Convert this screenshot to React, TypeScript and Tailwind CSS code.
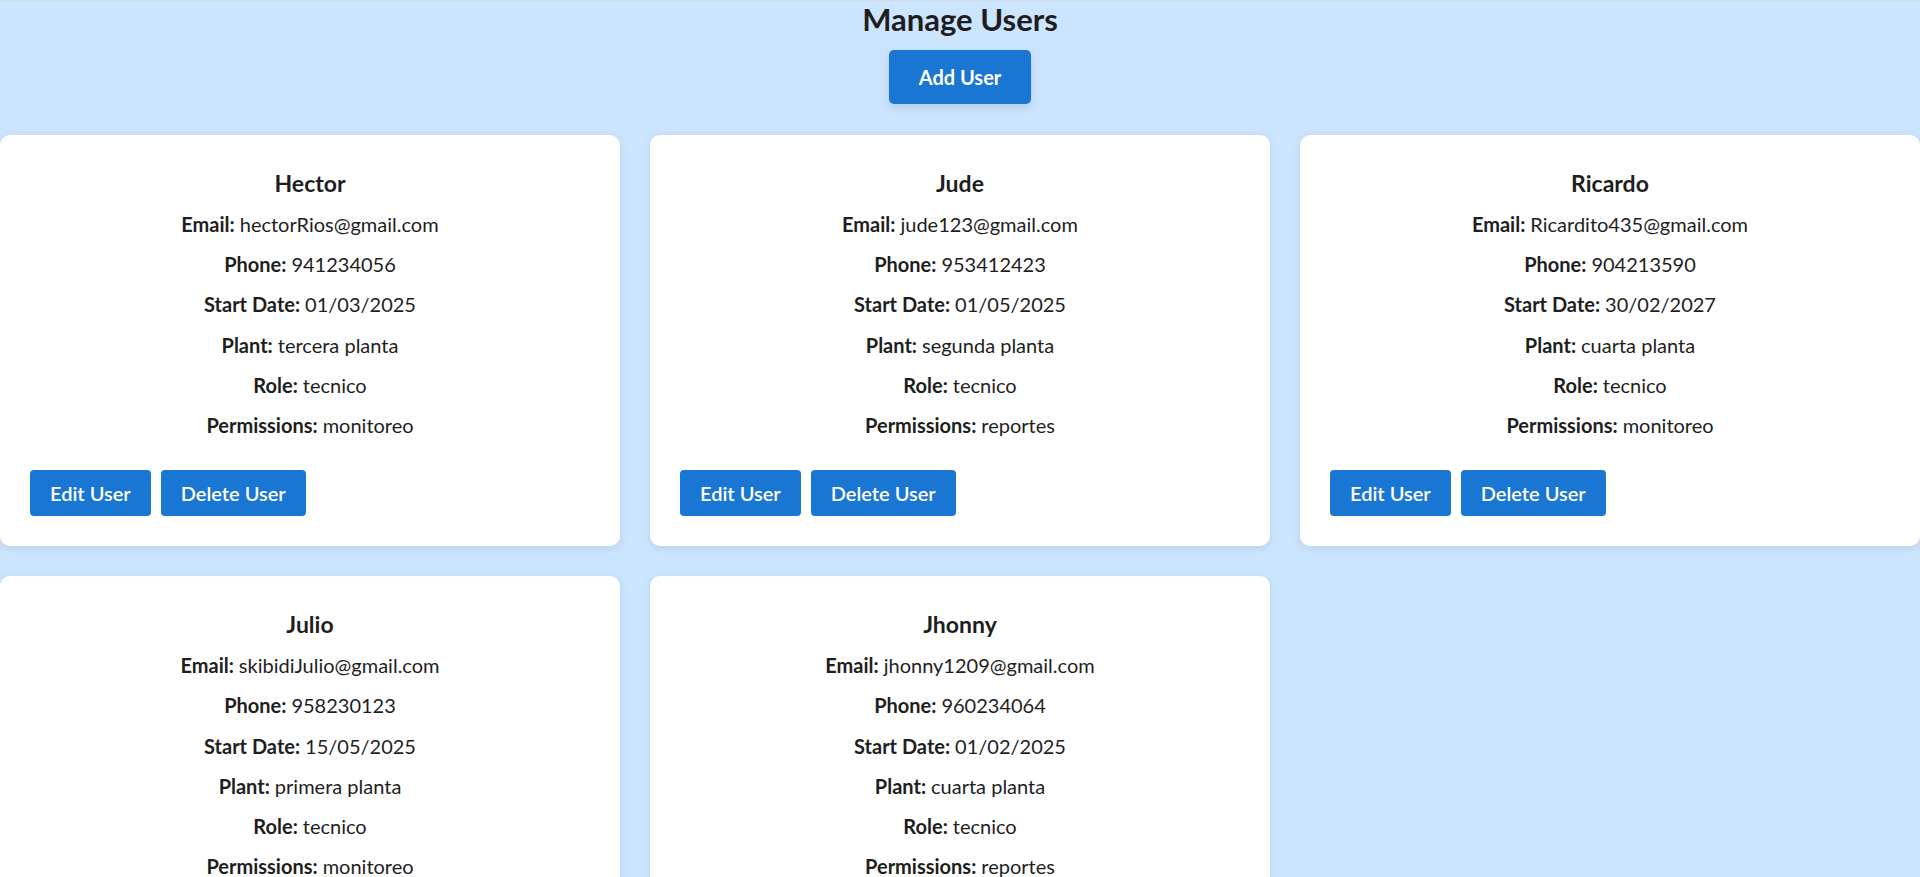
const users = [
  { name: "Hector", email: "hectorRios@gmail.com", phone: "941234056", start: "01/03/2025", plant: "tercera planta", role: "tecnico", perms: "monitoreo" },
  { name: "Jude", email: "jude123@gmail.com", phone: "953412423", start: "01/05/2025", plant: "segunda planta", role: "tecnico", perms: "reportes" },
  { name: "Ricardo", email: "Ricardito435@gmail.com", phone: "904213590", start: "30/02/2027", plant: "cuarta planta", role: "tecnico", perms: "monitoreo" },
  { name: "Julio", email: "skibidiJulio@gmail.com", phone: "958230123", start: "15/05/2025", plant: "primera planta", role: "tecnico", perms: "monitoreo" },
  { name: "Jhonny", email: "jhonny1209@gmail.com", phone: "960234064", start: "01/02/2025", plant: "cuarta planta", role: "tecnico", perms: "reportes" },
];

const Field = ({ label, value }: { label: string; value: string }) => (
  <p className="h-[40.2px] flex items-center justify-center">
    <span className="font-bold mr-[5px]">{label}:</span>
    {value}
  </p>
);

const UserCard = ({ u }: { u: (typeof users)[number] }) => (
  <div className="bg-white rounded-[10px] shadow-[0_2px_8px_rgba(0,0,0,0.1)] px-[30px] pt-[28px] pb-[30px]">
    <h3 className="text-center text-[23px] font-bold h-[41px] flex items-center justify-center">{u.name}</h3>
    <div className="text-center">
      <Field label="Email" value={u.email} />
      <Field label="Phone" value={u.phone} />
      <Field label="Start Date" value={u.start} />
      <Field label="Plant" value={u.plant} />
      <Field label="Role" value={u.role} />
      <Field label="Permissions" value={u.perms} />
    </div>
    <div className="flex gap-[10px] mt-[25px]">
      <button className="h-[46px] px-5 bg-[#1976d2] text-white font-semibold rounded-[4px]">Edit User</button>
      <button className="h-[46px] px-5 bg-[#1976d2] text-white font-semibold rounded-[4px]">Delete User</button>
    </div>
  </div>
);

export default function App() {
  return (
    <div
      className="min-h-screen bg-[#cce5ff] border-t border-[#d5dbe2] text-[20px] text-[#1e1e1e]"
      style={{ fontFamily: "'Segoe UI', Lato, 'Open Sans', sans-serif" }}
    >
      <h1 className="text-center text-[31px] font-bold leading-[36px] mt-0">Manage Users</h1>
      <div className="flex justify-center mt-[13px]">
        <button className="h-[54px] px-[30px] bg-[#1976d2] text-white font-bold rounded-[5px] shadow-[0_4px_10px_rgba(0,0,0,0.12)]">
          Add User
        </button>
      </div>
      <div className="grid grid-cols-3 gap-[30px] mt-[31px]">
        {users.map((u) => (
          <UserCard key={u.name} u={u} />
        ))}
      </div>
    </div>
  );
}
